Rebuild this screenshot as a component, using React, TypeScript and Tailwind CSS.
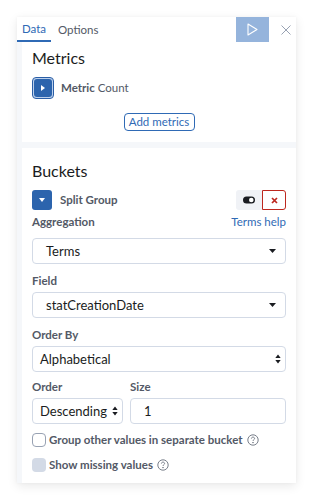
import React from "react";

const font = { fontFamily: "Lato, 'Noto Sans', sans-serif" };

function CaretDown() {
  return (
    <svg width="7" height="4" viewBox="0 0 7 4"><path d="M0 0h7L3.5 4z" fill="#1a1c21" /></svg>
  );
}
function UpDown() {
  return (
    <svg width="6" height="10" viewBox="0 0 6 10"><path d="M0.3 4h5.4L3 0.4z M0.3 6h5.4L3 9.6z" fill="#1a1c21" /></svg>
  );
}
function Help() {
  return (
    <svg width="12" height="12" viewBox="0 0 12 12" fill="none" stroke="#69707d" strokeWidth="0.9">
      <circle cx="6" cy="6" r="5.2" />
      <path d="M4.4 4.6c0-.9.7-1.5 1.6-1.5s1.6.6 1.6 1.4c0 1.2-1.6 1.2-1.6 2.5" />
      <circle cx="6" cy="8.7" r="0.35" fill="#69707d" />
    </svg>
  );
}

function Label({ children, className = "" }: { children: React.ReactNode; className?: string }) {
  return <div className={"text-[11.5px] leading-[16px] font-bold text-[#535966] " + className}>{children}</div>;
}

function Select({ text, pl, pr, updown = false }: { text: string; pl: string; pr: string; updown?: boolean }) {
  return (
    <div className={"h-[26px] rounded-[4px] border border-[#d3dae6] bg-white flex items-center " + pl + " " + pr}>
      <span className="text-[13px] leading-[16px] text-[#1a1c21] flex-1 whitespace-nowrap">{text}</span>
      {updown ? <UpDown /> : <CaretDown />}
    </div>
  );
}

export default function App() {
  return (
    <div className="w-[312px] h-[500px] bg-white pt-[17px] pl-[17px]" style={font}>
      <div className="w-[279px] h-[466px] flex flex-col bg-[#f5f7fa] shadow-[0_3px_10px_rgba(0,0,0,0.09),0_0_3px_rgba(0,0,0,0.04)]">
        <div className="h-[25px] shrink-0 bg-white flex items-stretch">
          <div className="w-[34px] flex items-center justify-center text-[11.5px] text-[#2f6ab5] border-b-2 border-[#2f6ab5] pt-[1px]">Data</div>
          <div className="ml-[7px] flex items-center text-[11.5px] text-[#535966]">Options</div>
          <div className="ml-auto w-[33px] bg-[#95b4dc] flex items-center justify-center">
            <svg width="11" height="13" viewBox="0 0 11 13" fill="none" stroke="white" strokeWidth="1.1">
              <path d="M1 1l9 5.5L1 12z" strokeLinejoin="round" />
            </svg>
          </div>
          <div className="w-[27px] flex items-center justify-end pr-[5px]">
            <svg width="10" height="10" viewBox="0 0 10 10" stroke="#98a2b3" strokeWidth="1">
              <path d="M0.5 0.5l9 9M9.5 0.5l-9 9" />
            </svg>
          </div>
        </div>
        <div className="flex-1 flex flex-col gap-[6px] pl-[5px]">
          <div className="h-[100px] shrink-0 bg-white px-[10px] pt-[4px] flex flex-col">
            <div className="text-[16px] leading-[24px] text-[#1a1c21]">Metrics</div>
            <div className="mt-[7px] flex items-center gap-[7px]">
              <div className="w-[22px] h-[22px] rounded-[4px] border border-[#2a5ea6] bg-[#bcd0ec] p-[1px]">
                <div className="w-full h-full rounded-[3px] bg-[#2c64ad] flex items-center justify-center">
                  <svg width="4" height="6" viewBox="0 0 4 6"><path d="M0 0l4 3-4 3z" fill="white" /></svg>
                </div>
              </div>
              <span className="text-[11.5px] text-[#535966]"><b className="font-bold text-[#535966]">Metric</b> Count</span>
            </div>
            <div className="mt-[14px] flex justify-center">
              <div className="w-[71px] h-[18px] rounded-[4px] border border-[#2f6ab5] text-[11.5px] text-[#2f6ab5] flex items-center justify-center">Add metrics</div>
            </div>
          </div>
          <div className="flex-1 bg-white px-[10px] pt-[11px] flex flex-col">
            <div className="text-[16px] leading-[24px] text-[#1a1c21]">Buckets</div>
            <div className="mt-[7px] flex items-center">
              <div className="w-[20px] h-[20px] rounded-[3px] bg-[#2c64ad] flex items-center justify-center">
                <svg width="6" height="4" viewBox="0 0 6 4"><path d="M0 0h6L3 4z" fill="white" /></svg>
              </div>
              <span className="ml-[8px] text-[11.5px] font-bold text-[#535966]">Split Group</span>
              <div className="ml-auto w-[26px] h-[20px] rounded-l-[3px] bg-[#f0f2f6] flex items-center justify-center">
                <svg width="12" height="8" viewBox="0 0 12 8">
                  <rect x="0" y="0.5" width="12" height="7" rx="3.5" fill="#1a1c21" />
                  <circle cx="8.3" cy="4" r="2.3" fill="white" />
                </svg>
              </div>
              <div className="w-[24px] h-[20px] rounded-r-[3px] border border-[#bd271e] bg-white flex items-center justify-center">
                <svg width="7" height="7" viewBox="0 0 7 7" stroke="#bd271e" strokeWidth="1.7">
                  <path d="M1 1l5 5M6 1l-5 5" />
                </svg>
              </div>
            </div>
            <div className="mt-[4px] flex items-center justify-between">
              <Label>Aggregation</Label>
              <span className="text-[11.5px] leading-[16px] text-[#2f6ab5]">Terms help</span>
            </div>
            <div className="mt-[8px]"><Select text="Terms" pl="pl-[13px]" pr="pr-[9px]" /></div>
            <Label className="mt-[9px]">Field</Label>
            <div className="mt-[3px]"><Select text="statCreationDate" pl="pl-[13px]" pr="pr-[9px]" /></div>
            <Label className="mt-[9px]">Order By</Label>
            <div className="mt-[3px]"><Select text="Alphabetical" pl="pl-[7px]" pr="pr-[4px]" updown /></div>
            <div className="mt-[7px] flex gap-[7px]">
              <div className="w-[91px] shrink-0 flex flex-col">
                <Label>Order</Label>
                <div className="mt-[3px]"><Select text="Descending" pl="pl-[7px]" pr="pr-[4px]" updown /></div>
              </div>
              <div className="flex-1 flex flex-col">
                <Label>Size</Label>
                <div className="mt-[3px] h-[26px] rounded-[4px] border border-[#d3dae6] flex items-center pl-[13px]">
                  <span className="text-[13px] leading-[16px] text-[#1a1c21]">1</span>
                </div>
              </div>
            </div>
            <div className="mt-[9px] h-[14px] flex items-center">
              <div className="w-[14px] h-[14px] shrink-0 rounded-[4px] border border-[#98a2b3] bg-white" />
              <span className="ml-[3px] text-[11.5px] leading-[14px] font-bold text-[#535966] whitespace-nowrap">Group other values in separate bucket</span>
              <span className="ml-[4px] flex"><Help /></span>
            </div>
            <div className="mt-[11px] h-[14px] flex items-center">
              <div className="w-[14px] h-[14px] shrink-0 rounded-[4px] bg-[#d3dae6]" />
              <span className="ml-[3px] text-[11.5px] leading-[14px] font-bold text-[#535966] whitespace-nowrap">Show missing values</span>
              <span className="ml-[4px] flex"><Help /></span>
            </div>
          </div>
        </div>
      </div>
    </div>
  );
}
